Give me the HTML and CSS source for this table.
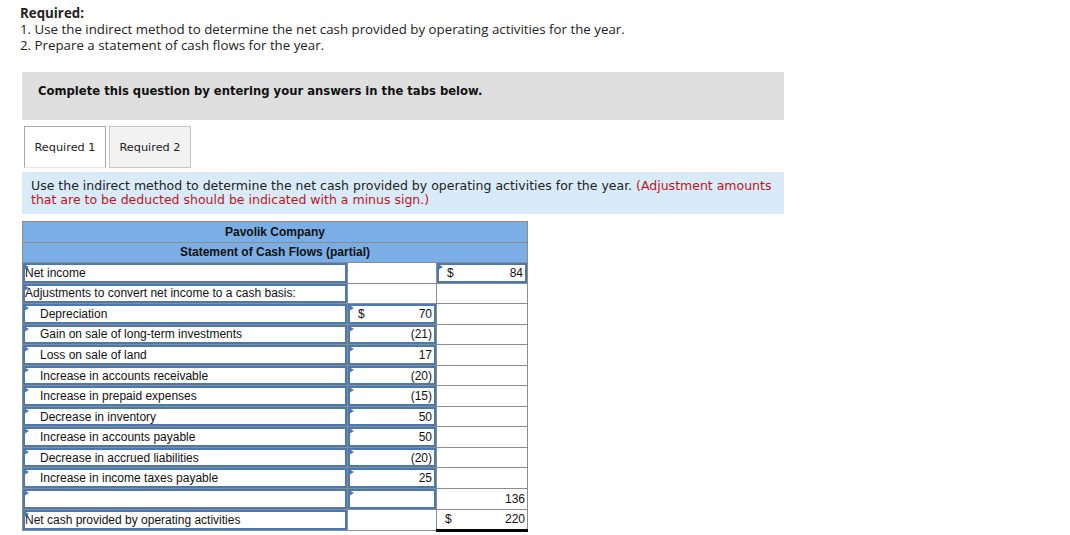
FILE: index.html
```html
<!DOCTYPE html>
<html>
<head>
<meta charset="utf-8">
<link rel="stylesheet" href="styles.css">
</head>
<body>
<div class="req">
  <div class="req-title">Required:</div>
  <div>1. Use the indirect method to determine the net cash provided by operating activities for the year.</div>
  <div>2. Prepare a statement of cash flows for the year.</div>
</div>
<div class="banner">Complete this question by entering your answers in the tabs below.</div>
<div class="tabs">
  <div class="tab active">Required 1</div>
  <div class="tab">Required 2</div>
</div>
<div class="instr">Use the indirect method to determine the net cash provided by operating activities for the year. <span class="red">(Adjustment amounts that are to be deducted should be indicated with a minus sign.)</span></div>
<table class="sheet">
  <colgroup><col class="c1"><col class="c2"><col class="c3"></colgroup>
  <tr class="hd"><td colspan="3">Pavolik Company</td></tr>
  <tr class="hd"><td colspan="3">Statement of Cash Flows (partial)</td></tr>
  <tr><td><div class="in">Net income</div></td><td></td><td><div class="in amt"><span>$</span><span>84</span></div></td></tr>
  <tr><td><div class="in">Adjustments to convert net income to a cash basis:</div></td><td></td><td></td></tr>
  <tr><td><div class="in ind">Depreciation</div></td><td><div class="in amt"><span>$</span><span>70</span></div></td><td></td></tr>
  <tr><td><div class="in ind">Gain on sale of long-term investments</div></td><td><div class="in amt"><span></span><span>(21)</span></div></td><td></td></tr>
  <tr><td><div class="in ind">Loss on sale of land</div></td><td><div class="in amt"><span></span><span>17</span></div></td><td></td></tr>
  <tr><td><div class="in ind">Increase in accounts receivable</div></td><td><div class="in amt"><span></span><span>(20)</span></div></td><td></td></tr>
  <tr><td><div class="in ind">Increase in prepaid expenses</div></td><td><div class="in amt"><span></span><span>(15)</span></div></td><td></td></tr>
  <tr><td><div class="in ind">Decrease in inventory</div></td><td><div class="in amt"><span></span><span>50</span></div></td><td></td></tr>
  <tr><td><div class="in ind">Increase in accounts payable</div></td><td><div class="in amt"><span></span><span>50</span></div></td><td></td></tr>
  <tr><td><div class="in ind">Decrease in accrued liabilities</div></td><td><div class="in amt"><span></span><span>(20)</span></div></td><td></td></tr>
  <tr><td><div class="in ind">Increase in income taxes payable</div></td><td><div class="in amt"><span></span><span>25</span></div></td><td></td></tr>
  <tr><td><div class="in">&nbsp;</div></td><td><div class="in amt"><span></span><span></span></div></td><td class="sub"><div class="plain amt"><span></span><span>136</span></div></td></tr>
  <tr><td><div class="in">Net cash provided by operating activities</div></td><td></td><td class="tot"><div class="plain amt"><span>$</span><span>220</span></div></td></tr>
</table>
</body>
</html>
```
FILE: styles.css
```css
html, body { margin: 0; padding: 0; background: #fff; }
body { padding: 5px 0 0 20px; color: #1a1a1a; }
.req { font-family: "Open Sans", "Lato", sans-serif; font-size: 13.3px; line-height: 16px; color: #222; }
.req-title { font-weight: bold; }
.banner {
  margin: 19px 0 0 2px; width: 762px; height: 48px; box-sizing: border-box;
  background: #dfdfdf; padding: 12px 16px 0; line-height: 14px;
  font-family: "DejaVu Sans", Verdana, sans-serif; font-weight: bold; font-size: 11.6px; color: #111;
}
.tabs { display: flex; gap: 3px; margin: 6px 0 0 4px; }
.tab {
  width: 82px; height: 42px; box-sizing: border-box; border: 1px solid #c8c8c8;
  background: #f2f2f2; display: flex; align-items: center; justify-content: center;
  font-family: "DejaVu Sans", Verdana, sans-serif; font-size: 11.3px; color: #222;
}
.tab.active { background: #fff; border-color: #aaa; border-bottom-color: #dbe8f3; }
.instr {
  margin: 4px 0 0 2px; width: 762px; box-sizing: border-box; background: #d9ebf9;
  padding: 7px 9px 7px; font-family: "DejaVu Sans", Verdana, sans-serif; font-size: 12.5px; line-height: 14px; color: #222;
}
.red { color: #c0141b; }
.sheet {
  margin: 7px 0 0 2px; border-collapse: collapse; table-layout: fixed; width: 505px;
  font-family: "Liberation Sans", Arial, sans-serif; font-size: 12px; color: #111;
}
.c1 { width: 325px; } .c2 { width: 89px; } .c3 { width: 91px; }
.sheet td { border: 1px solid #8c8c8c; padding: 0; height: 19.55px; }
.sheet tr.hd td { background: #7aaee5; text-align: center; font-weight: bold; height: 19.5px; }
.in {
  position: relative; height: 100%; box-sizing: border-box; border: 2px solid #4a78b0;
  padding: 0; display: flex; align-items: center; white-space: nowrap; background: #fff;
}
.in::before {
  content: ""; position: absolute; left: 0; top: 0; border-style: solid; border-width: 3px 0 3px 5px;
  border-color: transparent transparent transparent #4a78b0; transform: translate(-1px, -1px);
}
.in.ind { padding-left: 15px; }
.plain { height: 100%; box-sizing: border-box; padding: 0 2px; display: flex; align-items: center; }
.amt { justify-content: space-between; padding: 0 2px 0 8px; }
.sheet td.tot { border-top: 1px solid #000; border-bottom: 3px solid #000; }
```
